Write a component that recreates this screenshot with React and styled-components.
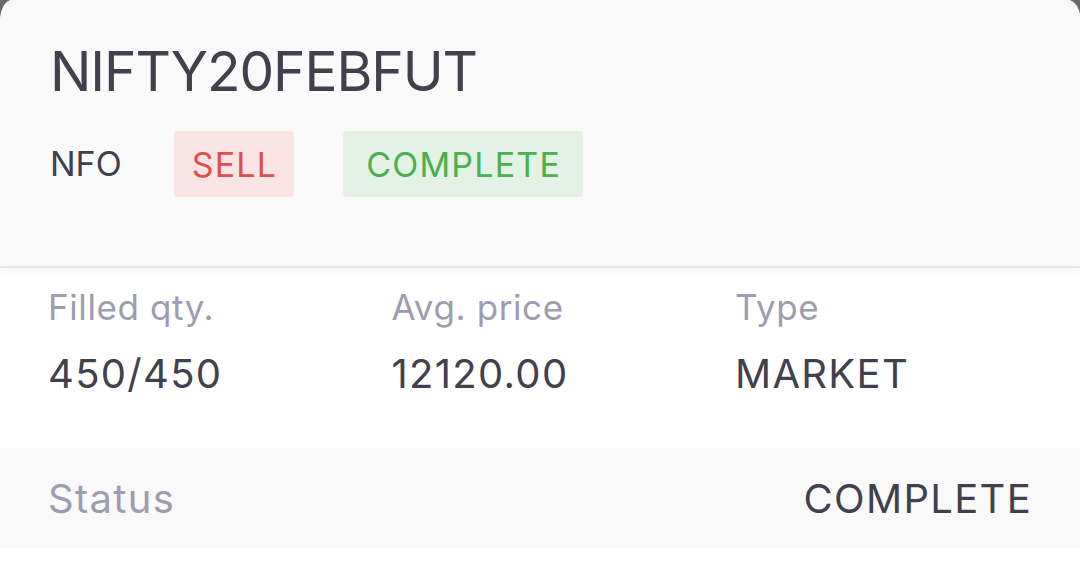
import React from "react";
import styled, { createGlobalStyle } from "styled-components";

const GlobalStyle = createGlobalStyle`
  html, body {
    margin: 0;
    padding: 0;
    background: #6b6b6b;
  }
  * { box-sizing: border-box; }
`;

const Sheet = styled.div`
  width: 1080px;
  height: 565px;
  background: #ffffff;
  border-top-left-radius: 12px 22px;
  border-top-right-radius: 13px 18px;
  overflow: hidden;
  font-family: Inter, "Noto Sans", sans-serif;
  color: #41414e;
`;

const Header = styled.div`
  height: 268px;
  background: #f9f9f9;
  padding: 44px 50px 0;
  border-bottom: 2px solid #e7e7e7;
  box-shadow: 0 4px 10px rgba(0, 0, 0, 0.035);
  position: relative;
`;

const Title = styled.h1`
  margin: 0;
  font-size: 55px;
  line-height: 55px;
  font-weight: 400;
  letter-spacing: -1.1px;
`;

const Tags = styled.div`
  display: flex;
  align-items: center;
  margin-top: 32px;
  gap: 49px;
`;

const Exchange = styled.span`
  font-size: 34px;
  line-height: 66px;
  margin-right: 3px;
`;

const Badge = styled.span`
  height: 66px;
  display: inline-flex;
  align-items: center;
  padding: 0 ${(p) => p.$pad}px 0 ${(p) => p.$pad + 1}px;
  border-radius: 4px;
  font-size: 34px;
  letter-spacing: 1.2px;
  background: ${(p) => (p.$tone === "red" ? "#fae4e4" : "#e4f2e6")};
  color: ${(p) => (p.$tone === "red" ? "#df4f4b" : "#4caf50")};
`;

const Stats = styled.div`
  display: grid;
  grid-template-columns: repeat(3, 343.5px);
  padding: 22px 48px 0;
`;

const Stat = styled.div`
  display: flex;
  flex-direction: column;
  gap: 29px;
`;

const Label = styled.span`
  font-size: 35px;
  line-height: 35px;
  letter-spacing: 0.6px;
  color: #9d9daf;
`;

const Value = styled.span`
  font-size: 40px;
  line-height: 40px;
  letter-spacing: 1.3px;
`;

const StatusRow = styled.div`
  margin-top: 54px;
  height: 100px;
  background: #f9f9f9;
  display: flex;
  align-items: center;
  justify-content: space-between;
  padding: 0 48px 0 48px;
  font-size: 40px;
  letter-spacing: 1.3px;
`;

const StatusLabel = styled.span`
  color: #9d9daf;
`;

const stats = [
  { label: "Filled qty.", value: "450/450" },
  { label: "Avg. price", value: "12120.00" },
  { label: "Type", value: "MARKET" },
];

export default function App() {
  return (
    <>
      <GlobalStyle />
      <Sheet>
        <Header>
          <Title>NIFTY20FEBFUT</Title>
          <Tags>
            <Exchange>NFO</Exchange>
            <Badge $tone="red" $pad={17}>SELL</Badge>
            <Badge $tone="green" $pad={22}>COMPLETE</Badge>
          </Tags>
        </Header>
        <Stats>
          {stats.map((s) => (
            <Stat key={s.label}>
              <Label>{s.label}</Label>
              <Value>{s.value}</Value>
            </Stat>
          ))}
        </Stats>
        <StatusRow>
          <StatusLabel>Status</StatusLabel>
          <span>COMPLETE</span>
        </StatusRow>
      </Sheet>
    </>
  );
}
